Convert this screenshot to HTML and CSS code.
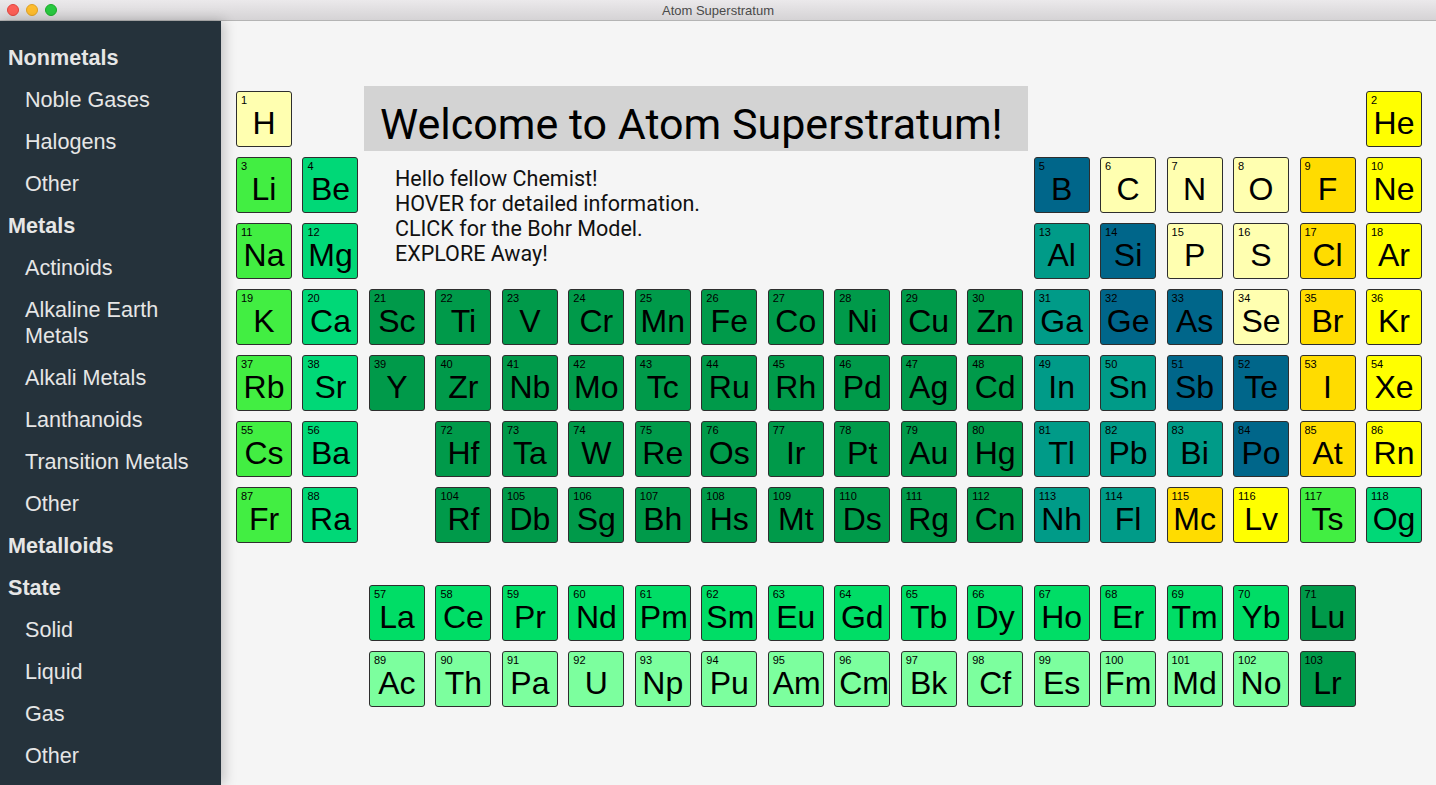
FILE: index.html
```html
<!DOCTYPE html>
<html>
<head>
<meta charset="utf-8">
<title>Atom Superstratum</title>
<link rel="stylesheet" href="styles.css">
</head>
<body>
<div class="titlebar">
  <div class="lights"><span class="light red"></span><span class="light yellow"></span><span class="light green"></span></div>
  <div class="title">Atom Superstratum</div>
</div>
<div class="app">
  <nav class="sidebar">
    <div class="head">Nonmetals</div>
    <div class="item">Noble Gases</div>
    <div class="item">Halogens</div>
    <div class="item">Other</div>
    <div class="head">Metals</div>
    <div class="item">Actinoids</div>
    <div class="item">Alkaline Earth Metals</div>
    <div class="item">Alkali Metals</div>
    <div class="item">Lanthanoids</div>
    <div class="item">Transition Metals</div>
    <div class="item">Other</div>
    <div class="head">Metalloids</div>
    <div class="head">State</div>
    <div class="item">Solid</div>
    <div class="item">Liquid</div>
    <div class="item">Gas</div>
    <div class="item">Other</div>
  </nav>
  <main class="main">
    <div class="table">
      <div class="welcome">
        <h1 class="banner">Welcome to Atom Superstratum!</h1>
        <p class="intro">Hello fellow Chemist!<br>HOVER for detailed information.<br>CLICK for the Bohr Model.<br>EXPLORE Away!</p>
      </div>
      <div class="el nm"><span class="num">1</span><span class="sym">H</span></div>
      <div class="el nob c18"><span class="num">2</span><span class="sym">He</span></div>

      <div class="el alk"><span class="num">3</span><span class="sym">Li</span></div>
      <div class="el ae"><span class="num">4</span><span class="sym">Be</span></div>
      <div class="el md c13"><span class="num">5</span><span class="sym">B</span></div>
      <div class="el nm"><span class="num">6</span><span class="sym">C</span></div>
      <div class="el nm"><span class="num">7</span><span class="sym">N</span></div>
      <div class="el nm"><span class="num">8</span><span class="sym">O</span></div>
      <div class="el hal"><span class="num">9</span><span class="sym">F</span></div>
      <div class="el nob"><span class="num">10</span><span class="sym">Ne</span></div>

      <div class="el alk"><span class="num">11</span><span class="sym">Na</span></div>
      <div class="el ae"><span class="num">12</span><span class="sym">Mg</span></div>
      <div class="el pt c13"><span class="num">13</span><span class="sym">Al</span></div>
      <div class="el md"><span class="num">14</span><span class="sym">Si</span></div>
      <div class="el nm"><span class="num">15</span><span class="sym">P</span></div>
      <div class="el nm"><span class="num">16</span><span class="sym">S</span></div>
      <div class="el hal"><span class="num">17</span><span class="sym">Cl</span></div>
      <div class="el nob"><span class="num">18</span><span class="sym">Ar</span></div>

      <div class="el alk"><span class="num">19</span><span class="sym">K</span></div>
      <div class="el ae"><span class="num">20</span><span class="sym">Ca</span></div>
      <div class="el tm"><span class="num">21</span><span class="sym">Sc</span></div>
      <div class="el tm"><span class="num">22</span><span class="sym">Ti</span></div>
      <div class="el tm"><span class="num">23</span><span class="sym">V</span></div>
      <div class="el tm"><span class="num">24</span><span class="sym">Cr</span></div>
      <div class="el tm"><span class="num">25</span><span class="sym">Mn</span></div>
      <div class="el tm"><span class="num">26</span><span class="sym">Fe</span></div>
      <div class="el tm"><span class="num">27</span><span class="sym">Co</span></div>
      <div class="el tm"><span class="num">28</span><span class="sym">Ni</span></div>
      <div class="el tm"><span class="num">29</span><span class="sym">Cu</span></div>
      <div class="el tm"><span class="num">30</span><span class="sym">Zn</span></div>
      <div class="el pt"><span class="num">31</span><span class="sym">Ga</span></div>
      <div class="el md"><span class="num">32</span><span class="sym">Ge</span></div>
      <div class="el md"><span class="num">33</span><span class="sym">As</span></div>
      <div class="el nm"><span class="num">34</span><span class="sym">Se</span></div>
      <div class="el hal"><span class="num">35</span><span class="sym">Br</span></div>
      <div class="el nob"><span class="num">36</span><span class="sym">Kr</span></div>

      <div class="el alk"><span class="num">37</span><span class="sym">Rb</span></div>
      <div class="el ae"><span class="num">38</span><span class="sym">Sr</span></div>
      <div class="el tm"><span class="num">39</span><span class="sym">Y</span></div>
      <div class="el tm"><span class="num">40</span><span class="sym">Zr</span></div>
      <div class="el tm"><span class="num">41</span><span class="sym">Nb</span></div>
      <div class="el tm"><span class="num">42</span><span class="sym">Mo</span></div>
      <div class="el tm"><span class="num">43</span><span class="sym">Tc</span></div>
      <div class="el tm"><span class="num">44</span><span class="sym">Ru</span></div>
      <div class="el tm"><span class="num">45</span><span class="sym">Rh</span></div>
      <div class="el tm"><span class="num">46</span><span class="sym">Pd</span></div>
      <div class="el tm"><span class="num">47</span><span class="sym">Ag</span></div>
      <div class="el tm"><span class="num">48</span><span class="sym">Cd</span></div>
      <div class="el pt"><span class="num">49</span><span class="sym">In</span></div>
      <div class="el pt"><span class="num">50</span><span class="sym">Sn</span></div>
      <div class="el md"><span class="num">51</span><span class="sym">Sb</span></div>
      <div class="el md"><span class="num">52</span><span class="sym">Te</span></div>
      <div class="el hal"><span class="num">53</span><span class="sym">I</span></div>
      <div class="el nob"><span class="num">54</span><span class="sym">Xe</span></div>

      <div class="el alk"><span class="num">55</span><span class="sym">Cs</span></div>
      <div class="el ae"><span class="num">56</span><span class="sym">Ba</span></div>
      <div class="el tm c4"><span class="num">72</span><span class="sym">Hf</span></div>
      <div class="el tm"><span class="num">73</span><span class="sym">Ta</span></div>
      <div class="el tm"><span class="num">74</span><span class="sym">W</span></div>
      <div class="el tm"><span class="num">75</span><span class="sym">Re</span></div>
      <div class="el tm"><span class="num">76</span><span class="sym">Os</span></div>
      <div class="el tm"><span class="num">77</span><span class="sym">Ir</span></div>
      <div class="el tm"><span class="num">78</span><span class="sym">Pt</span></div>
      <div class="el tm"><span class="num">79</span><span class="sym">Au</span></div>
      <div class="el tm"><span class="num">80</span><span class="sym">Hg</span></div>
      <div class="el pt"><span class="num">81</span><span class="sym">Tl</span></div>
      <div class="el pt"><span class="num">82</span><span class="sym">Pb</span></div>
      <div class="el pt"><span class="num">83</span><span class="sym">Bi</span></div>
      <div class="el md"><span class="num">84</span><span class="sym">Po</span></div>
      <div class="el hal"><span class="num">85</span><span class="sym">At</span></div>
      <div class="el nob"><span class="num">86</span><span class="sym">Rn</span></div>

      <div class="el alk"><span class="num">87</span><span class="sym">Fr</span></div>
      <div class="el ae"><span class="num">88</span><span class="sym">Ra</span></div>
      <div class="el tm c4"><span class="num">104</span><span class="sym">Rf</span></div>
      <div class="el tm"><span class="num">105</span><span class="sym">Db</span></div>
      <div class="el tm"><span class="num">106</span><span class="sym">Sg</span></div>
      <div class="el tm"><span class="num">107</span><span class="sym">Bh</span></div>
      <div class="el tm"><span class="num">108</span><span class="sym">Hs</span></div>
      <div class="el tm"><span class="num">109</span><span class="sym">Mt</span></div>
      <div class="el tm"><span class="num">110</span><span class="sym">Ds</span></div>
      <div class="el tm"><span class="num">111</span><span class="sym">Rg</span></div>
      <div class="el tm"><span class="num">112</span><span class="sym">Cn</span></div>
      <div class="el pt"><span class="num">113</span><span class="sym">Nh</span></div>
      <div class="el pt"><span class="num">114</span><span class="sym">Fl</span></div>
      <div class="el hal"><span class="num">115</span><span class="sym">Mc</span></div>
      <div class="el nob"><span class="num">116</span><span class="sym">Lv</span></div>
      <div class="el alk"><span class="num">117</span><span class="sym">Ts</span></div>
      <div class="el ae"><span class="num">118</span><span class="sym">Og</span></div>
    </div>

    <div class="table fblock">
      <div class="el la c3"><span class="num">57</span><span class="sym">La</span></div>
      <div class="el la"><span class="num">58</span><span class="sym">Ce</span></div>
      <div class="el la"><span class="num">59</span><span class="sym">Pr</span></div>
      <div class="el la"><span class="num">60</span><span class="sym">Nd</span></div>
      <div class="el la"><span class="num">61</span><span class="sym">Pm</span></div>
      <div class="el la"><span class="num">62</span><span class="sym">Sm</span></div>
      <div class="el la"><span class="num">63</span><span class="sym">Eu</span></div>
      <div class="el la"><span class="num">64</span><span class="sym">Gd</span></div>
      <div class="el la"><span class="num">65</span><span class="sym">Tb</span></div>
      <div class="el la"><span class="num">66</span><span class="sym">Dy</span></div>
      <div class="el la"><span class="num">67</span><span class="sym">Ho</span></div>
      <div class="el la"><span class="num">68</span><span class="sym">Er</span></div>
      <div class="el la"><span class="num">69</span><span class="sym">Tm</span></div>
      <div class="el la"><span class="num">70</span><span class="sym">Yb</span></div>
      <div class="el tm"><span class="num">71</span><span class="sym">Lu</span></div>

      <div class="el ac c3"><span class="num">89</span><span class="sym">Ac</span></div>
      <div class="el ac"><span class="num">90</span><span class="sym">Th</span></div>
      <div class="el ac"><span class="num">91</span><span class="sym">Pa</span></div>
      <div class="el ac"><span class="num">92</span><span class="sym">U</span></div>
      <div class="el ac"><span class="num">93</span><span class="sym">Np</span></div>
      <div class="el ac"><span class="num">94</span><span class="sym">Pu</span></div>
      <div class="el ac"><span class="num">95</span><span class="sym">Am</span></div>
      <div class="el ac"><span class="num">96</span><span class="sym">Cm</span></div>
      <div class="el ac"><span class="num">97</span><span class="sym">Bk</span></div>
      <div class="el ac"><span class="num">98</span><span class="sym">Cf</span></div>
      <div class="el ac"><span class="num">99</span><span class="sym">Es</span></div>
      <div class="el ac"><span class="num">100</span><span class="sym">Fm</span></div>
      <div class="el ac"><span class="num">101</span><span class="sym">Md</span></div>
      <div class="el ac"><span class="num">102</span><span class="sym">No</span></div>
      <div class="el tm"><span class="num">103</span><span class="sym">Lr</span></div>
    </div>
  </main>
</div>
</body>
</html>
```

FILE: styles.css
```css
* { box-sizing: border-box; }
html, body { margin: 0; padding: 0; }
body {
  width: 1436px;
  height: 785px;
  overflow: hidden;
  background: #f5f5f5;
  font-family: "Liberation Sans", Arial, sans-serif;
}

.titlebar {
  height: 21px;
  background: linear-gradient(#ebe9eb, #d5d3d5);
  border-bottom: 1px solid #b4b4b4;
  display: flex;
  align-items: center;
  position: relative;
}
.lights {
  display: flex;
  gap: 7px;
  padding-left: 7px;
}
.light {
  width: 12px;
  height: 12px;
  border-radius: 50%;
  display: block;
}
.red { background: #fc5f57; border: 0.5px solid #e0443e; }
.yellow { background: #fdbc2e; border: 0.5px solid #dea123; }
.green { background: #28c840; border: 0.5px solid #1aab29; }
.title {
  flex: 1;
  text-align: center;
  font-family: "Liberation Sans", Arial, sans-serif;
  font-size: 13px;
  color: #4a4a4a;
  margin-right: 57px;
}

.app {
  display: flex;
  height: 764px;
}

.sidebar {
  width: 221px;
  flex: none;
  background: #25323b;
  color: #e6e6e6;
  padding-top: 16px;
  position: relative;
  z-index: 1;
  box-shadow: 3px 0 12px rgba(0, 0, 0, 0.22);
  font-size: 21.6px;
}
.head, .item {
  line-height: 26px;
  padding: 8px 8px 8px 8px;
}
.head { font-weight: bold; }
.item { padding-left: 25px; padding-right: 16px; }

.main {
  flex: 1;
  padding: 70px 0 0 15px;
}

.table {
  display: grid;
  grid-template-columns: repeat(18, 56px);
  grid-auto-rows: 56px;
  column-gap: 10.47px;
  row-gap: 10px;
}
.fblock { margin-top: 42px; }

.c3 { grid-column-start: 3; }
.c4 { grid-column-start: 4; }
.c13 { grid-column-start: 13; }
.c18 { grid-column-start: 18; }

.welcome {
  grid-column: 3 / 13;
  grid-row: 1 / 4;
  font-family: Roboto, "Liberation Sans", sans-serif;
}
.banner {
  margin: -5px -5px 0 -5px;
  height: 65px;
  background: #d3d3d3;
  font-weight: normal;
  font-size: 43px;
  line-height: 53px;
  padding: 12px 0 0 16px;
  color: #000;
  white-space: nowrap;
}
.intro {
  margin: 15px 0 0 26px;
  font-size: 21.5px;
  line-height: 25px;
  color: #111;
}

.el {
  border: 1px solid #2e2e2e;
  border-radius: 3px;
  padding: 3px 3px 0 4px;
  color: #000;
}
.num {
  display: block;
  font-size: 11px;
  line-height: 11px;
  height: 12px;
}
.sym {
  display: block;
  text-align: center;
  font-size: 32px;
  line-height: 32px;
  margin-right: 1px;
}

.nm { background: #ffffb0; }
.hal { background: #ffdc00; }
.nob { background: #ffff00; }
.alk { background: #42ee42; }
.ae { background: #00d877; }
.tm { background: #009a4a; }
.pt { background: #009b88; }
.md { background: #00668a; }
.la { background: #00dd66; }
.ac { background: #7cff9e; }
```
